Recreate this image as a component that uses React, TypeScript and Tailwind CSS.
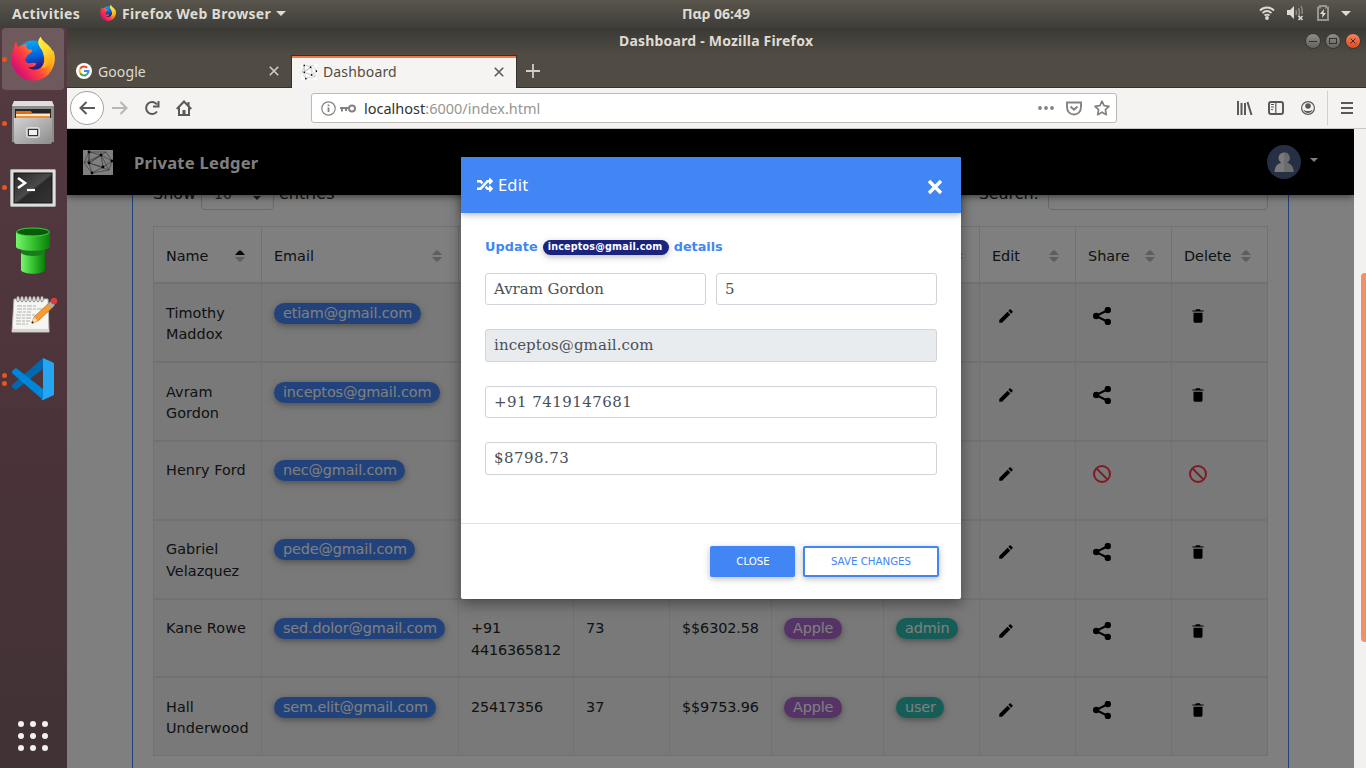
import React from "react";
import { IoMdCreate, IoMdTrash } from "react-icons/io";
import { FaRandom } from "react-icons/fa";

const widths = "grid-cols-[108px_197px_115px_96px_102px_112px_96px_96px_96px_97px]";

function Firefox({ size }: { size: number }) {
  return (
    <svg width={size} height={size} viewBox="0 0 44 44">
      <defs>
        <linearGradient id="fxo" x1="0.85" y1="0.1" x2="0.1" y2="0.7">
          <stop offset="0" stopColor="#ffe22b" />
          <stop offset="0.3" stopColor="#ffa318" />
          <stop offset="0.65" stopColor="#ff4040" />
          <stop offset="1" stopColor="#dc1170" />
        </linearGradient>
        <linearGradient id="fxb" x1="0.4" y1="0" x2="0.6" y2="1">
          <stop offset="0" stopColor="#00aef5" />
          <stop offset="0.45" stopColor="#0068e2" />
          <stop offset="0.8" stopColor="#2b1b83" />
        </linearGradient>
        <linearGradient id="fxy" x1="0" y1="0" x2="0.4" y2="1">
          <stop offset="0" stopColor="#fff44f" />
          <stop offset="0.6" stopColor="#ffd52e" />
          <stop offset="1" stopColor="#ffa818" />
        </linearGradient>
      </defs>
      <circle cx="22" cy="20" r="16.500" fill="url(#fxb)" />
      <path
        d="M5.500 4.500C5 7 6 9 7.500 10 10 8 13 7.500 16 7.500 15 9 15 11 17 12l4.500 1c0 2-2.500 3-5 5l-1 2.500C13.500 22 14 25 17 26c3 1 5-1.500 8.500.5-.5 2-3.500 4.500-8.500 3.500 3 3.500 9 3.500 13 .5C35 26 33 18 31 13c-4-5-5-9-1.300-13.300C31 5 40 8 41.500 15l.5-2c4 9 1 19-5 25-10 9-25 7-32-3-6-7-6-17-2-24 0-3 1-5 2.500-6.500Z"
        fill="url(#fxo)"
      />
      <path d="M29.700 0C26 4 27 8 31 13c3 7 4 13-1 18 7 0 12.500-6 12.500-15C40 8 31 6 29.700 0Z" fill="url(#fxy)" />
    </svg>
  );
}

function Files() {
  return (
    <svg width="42" height="44" viewBox="0 0 42 44">
      <defs>
        <linearGradient id="cab" x1="0" y1="0" x2="1" y2="1">
          <stop offset="0" stopColor="#d2d2d2" />
          <stop offset="1" stopColor="#8c8c8c" />
        </linearGradient>
      </defs>
      <path d="M2 0h38l2 5v36H0V5Z" fill="#8d8d8d" />
      <path d="M2 0h38l2 5H0Z" fill="#dedede" />
      <rect x="3" y="8" width="36" height="10" fill="#252525" />
      <path d="M4 10h15l1 2h18v5H4Z" fill="#e06b18" />
      <rect x="4" y="13" width="34" height="2" fill="#ffe8c4" />
      <rect x="4" y="15" width="34" height="3" fill="#f08d38" />
      <path d="M2 17h38v24c0 1-1 2-2 2H4c-1 0-2-1-2-2Z" fill="url(#cab)" />
      <rect x="14.500" y="26.500" width="13" height="10" rx="2" fill="#b9b9b9" stroke="#dedede" />
      <rect x="16.500" y="28.500" width="9" height="6" fill="#efefef" stroke="#333" />
    </svg>
  );
}

function Terminal() {
  return (
    <svg width="46" height="38" viewBox="0 0 46 38" className="mt-0.5">
      <defs>
        <linearGradient id="tm" x1="0" y1="0" x2="1" y2="1">
          <stop offset="0" stopColor="#262626" />
          <stop offset="0.5" stopColor="#4b4b4b" />
          <stop offset="0.55" stopColor="#292929" />
          <stop offset="1" stopColor="#353535" />
        </linearGradient>
      </defs>
      <rect x="0.500" y="0.500" width="45" height="37" rx="1" fill="#dedede" stroke="#aaa" />
      <rect x="4" y="4" width="38" height="30" fill="url(#tm)" stroke="#151515" />
      <path d="m8 9 7 5-7 5" fill="none" stroke="#fff" strokeWidth="2.600" />
      <path d="M17 21h8" stroke="#fff" strokeWidth="2.200" />
    </svg>
  );
}

function Pipe() {
  return (
    <svg width="36" height="48" viewBox="0 0 36 48">
      <defs>
        <linearGradient id="pp">
          <stop offset="0" stopColor="#78f56d" />
          <stop offset="0.5" stopColor="#35c130" />
          <stop offset="1" stopColor="#087d08" />
        </linearGradient>
      </defs>
      <path d="M6 18v25c2 5 22 5 24 0V18Z" fill="url(#pp)" />
      <path d="M6 22v4c4 4 20 4 24 0v-4Z" fill="#197c19" />
      <path d="M1 5v15c3 5 31 5 34 0V5Z" fill="url(#pp)" />
      <ellipse cx="18" cy="5" rx="16.500" ry="4" fill="#085c08" stroke="#3fd13a" />
    </svg>
  );
}

function Notes() {
  return (
    <svg width="48" height="38" viewBox="0 0 48 38" className="ml-0.5">
      <path d="M4 3h34l1 33H2Z" fill="#f5f5f2" stroke="#b7b7b2" />
      <path d="M2 33h37v3H2Z" fill="#d5d5ce" />
      {[8, 12, 16, 20, 24, 28, 32].map((x) => (
        <ellipse key={x} cx={x} cy="3" rx="1.300" ry="3" fill="#eee" stroke="#777" strokeWidth="0.800" />
      ))}
      <path d="M7 10h19M7 13h25M7 16h14M6 19h20M6 22h15M6 25h14M6 28h12" stroke="#aaa" strokeWidth="0.900" strokeDasharray="5 1 3 1" />
      <path d="m22 27 2-6L39 7l4 4-15 14Z" fill="#f59b31" stroke="#b96a1a" strokeWidth="0.700" />
      <path d="m22 27 2-6 4 4Z" fill="#f6d8ab" />
      <circle cx="22.500" cy="26.500" r="1" fill="#222" />
      <path d="m38 8 3-3 4 4-3 3Z" fill="#aaa" />
      <circle cx="44" cy="5" r="3.200" fill="#dd3940" />
    </svg>
  );
}

function Code() {
  return (
    <svg width="42" height="42" viewBox="0 0 42 42">
      <path d="M31 0 0 27c-.5 1 .2 2 1 3l3 2L31 11Z" fill="#0068ae" />
      <path d="M31 42 0 15c-.5-1 .2-2 1-3l3-2 27 21Z" fill="#0086d8" />
      <path d="m31 0 10 4.500c1 .5 1 1 1 2v29c0 1 0 1.500-1 2L31 42c-2 0-1-1 0-2Z" fill="#25a5f2" />
    </svg>
  );
}

function Net({ size, h, bg, line }: { size: number; h: number; bg: string; line: string }) {
  return (
    <svg width={size} height={h} viewBox="0 0 30 25" preserveAspectRatio="none">
      <rect width="30" height="25" fill={bg} />
      <path
        d="M6 2 23 2 29 11 26 20 9 23 1 13ZM6 2 18 5 29 11 20 17 9 23 6 13ZM6 13 18 5 20 17ZM6 2 6 13 26 20M1 13 18 5 26 20M23 2 6 13"
        fill="none"
        stroke={line}
        strokeWidth="0.500"
      />
      {[[6, 2], [18, 5], [29, 11], [20, 17], [9, 23], [6, 13]].map(([x, y]) => (
        <circle key={`${x}-${y}`} cx={x} cy={y} r="1.400" fill="#000" />
      ))}
    </svg>
  );
}

function DockItem({ dots = 0, active = false, children }: { dots?: number; active?: boolean; children: React.ReactNode }) {
  return (
    <div className="flex h-16 w-[67px] items-center">
      <div className="flex w-0.5 flex-none" />
      <div className={`flex h-[62px] w-[62px] items-center rounded ${active ? "bg-[#6e595d]" : ""}`}>
        <div className="flex w-[5px] flex-none flex-col gap-[3px]">
          {Array.from({ length: dots }, (_, i) => (
            <div key={i} className="h-[5px] w-[5px] rounded-full bg-[#e95420]" />
          ))}
        </div>
        <div className="flex w-[52px] flex-none justify-center">{children}</div>
      </div>
    </div>
  );
}

function Sort({ asc = false }: { asc?: boolean }) {
  return (
    <svg width="10" height="12" viewBox="0 0 10 12" className="-mt-0.5">
      <path d="M0 5 4 .5h2L10 5Z" fill={asc ? "#111" : "#bcbcbc"} />
      <path d="M0 7h10L6 11.500H4Z" fill="#bcbcbc" />
    </svg>
  );
}

function Share() {
  return (
    <svg width="18" height="18" viewBox="0 0 18 18">
      <path d="M15 3 3 9l12 6" fill="none" stroke="#000" strokeWidth="2" />
      <circle cx="14.800" cy="3" r="3.200" />
      <circle cx="3.200" cy="9" r="3.200" />
      <circle cx="14.800" cy="15" r="3.200" />
    </svg>
  );
}

function Blocked() {
  return (
    <svg width="18" height="18" viewBox="0 0 18 18" fill="none" stroke="#ff3547" strokeWidth="2">
      <circle cx="9" cy="9" r="8" />
      <path d="m3.400 3.400 11.200 11.200" />
    </svg>
  );
}

function Pill({ color, children }: { color: string; children: React.ReactNode }) {
  return (
    <span className={`inline-flex h-[21px] items-center rounded-full pl-[9px] pr-[8.5px] leading-none tracking-[-0.13px] text-white shadow-[0_2px_5px_0_rgba(0,0,0,0.2),0_2px_10px_0_rgba(0,0,0,0.16)] ${color}`}>
      {children}
    </span>
  );
}

type Row = { name: string; email: string; h: string; pad: string; lift?: boolean; phone?: string; age?: string; amount?: string; role?: string; locked?: boolean };
const rows: Row[] = [
  { name: "Timothy Maddox", email: "etiam@gmail.com", h: "h-[79px]", pad: "pt-[19px] leading-[21px]" },
  { name: "Avram Gordon", email: "inceptos@gmail.com", h: "h-[79px]", pad: "pt-[19px] leading-[21px]" },
  { name: "Henry Ford", email: "nec@gmail.com", h: "h-[79px]", pad: "pt-[18px] leading-[21.6px]", locked: true },
  { name: "Gabriel Velazquez", email: "pede@gmail.com", h: "h-[79px]", pad: "pt-[18px] leading-[21.6px]", lift: true },
  { name: "Kane Rowe", email: "sed.dolor@gmail.com", h: "h-[78px]", pad: "pt-[18px] leading-[21.6px]", lift: true, phone: "+91 4416365812", age: "73", amount: "$$6302.58", role: "admin" },
  { name: "Hall Underwood", email: "sem.elit@gmail.com", h: "h-[79px]", pad: "pt-[19px] leading-[21px]", phone: "25417356", age: "37", amount: "$$9753.96", role: "user" },
];
const heads = ["Name", "Email", "", "", "", "", "", "Edit", "Share", "Delete"];

function Ledger() {
  const cell = "border-l border-[#dee2e6] pl-3";
  return (
    <div className="h-full overflow-hidden bg-white pl-[65px] pt-[50px] font-['DejaVu_Sans',sans-serif] text-[14.4px] text-[#212529]">
      <div className="h-[720px] w-[1157px] border-x border-[#4285f4] px-5">
        <div className="flex h-[31px] items-center justify-between text-[16px]">
          <div className="flex h-[31px] items-center">
            <span className="-mt-0.5 w-12">Show</span>
            <div className="flex h-[31px] w-[73px] items-center justify-between rounded border border-[#ced4da] pl-3 pr-3 text-[#495057]">
              <span className="text-[14px]">10</span>
              <svg width="8" height="10" viewBox="0 0 8 10" className="fill-[#343a40]">
                <path d="m4 0 4 4H0ZM0 6h8l-4 4Z" />
              </svg>
            </div>
            <span className="-mt-0.5 ml-[5px]">entries</span>
          </div>
          <div className="flex items-center">
            <span className="-mt-0.5 mr-[9px]">Search:</span>
            <div className="h-[31px] w-[220px] rounded border border-[#ced4da]" />
          </div>
        </div>
        <div className="mt-4 w-[1115px] border-b border-r border-[#dee2e6]">
          <div className={`grid h-14 border-t border-[#dee2e6] ${widths}`}>
            {heads.map((h, i) => (
              <div key={i} className={`flex items-center justify-between border-l border-[#dee2e6] pl-3 pt-[5px] ${i === 9 ? "pr-[17px]" : "pr-4"}`}>
                <span>{h}</span>
                <Sort asc={i === 0} />
              </div>
            ))}
          </div>
          {rows.map((r) => (
            <div key={r.name} className={`grid border-t-2 border-[#dee2e6] bg-[#f2f2f2] ${widths} ${r.h}`}>
              <div className={`${cell} ${r.pad}`}><div className="w-[84px] tracking-[0.06px]">{r.name}</div></div>
              <div className={`${cell} ${r.pad}`}><Pill color="bg-[#4285f4]">{r.email}</Pill></div>
              <div className={`${cell} ${r.pad}`}>{r.phone && <div className="w-[92px] tracking-[-0.15px]">{r.phone}</div>}</div>
              <div className={`${cell} ${r.pad}`}>{r.age}</div>
              <div className={`${cell} tracking-[-0.1px] ${r.pad}`}>{r.amount}</div>
              <div className={`${cell} ${r.pad}`}>{r.role && <Pill color="bg-[#aa66cc]">Apple</Pill>}</div>
              <div className={`${cell} ${r.pad}`}>{r.role && <Pill color="bg-[#2bbbad]">{r.role}</Pill>}</div>
              {["edit", "share", "delete"].map((kind) => (
                <div key={kind} className={`border-l border-[#dee2e6] pl-3.5 text-black ${r.lift ? "pt-[19px]" : "pt-5"}`}>
                  <div className="flex h-6 w-6 items-center justify-center">
                    {kind === "edit" && <IoMdCreate size={18} />}
                    {kind !== "edit" && r.locked && <Blocked />}
                    {kind === "share" && !r.locked && <Share />}
                    {kind === "delete" && !r.locked && <IoMdTrash size={18} />}
                  </div>
                </div>
              ))}
            </div>
          ))}
        </div>
      </div>
    </div>
  );
}

function Field({ value, cls }: { value: string; cls: string }) {
  return (
    <div className={`flex items-center rounded-[3px] border border-[#ced4da] px-2 font-['DejaVu_Serif',serif] text-[15px] text-[#495057] ${cls}`}>
      {value}
    </div>
  );
}

function EditModal() {
  return (
    <div className="absolute left-[394px] top-7 flex h-[442px] w-[500px] flex-col rounded-[2px] bg-white font-['DejaVu_Sans',sans-serif] shadow-[0_5px_11px_0_rgba(0,0,0,0.18),0_4px_15px_0_rgba(0,0,0,0.25)]">
      <div className="flex h-14 flex-none items-center rounded-t-[2px] bg-[#4285f4] pl-4 pr-[18px] text-white shadow-[0_2px_5px_0_rgba(0,0,0,0.16),0_2px_10px_0_rgba(0,0,0,0.12)]">
        <FaRandom size={16} />
        <span className="ml-[5px] flex-1 font-['Noto_Sans',sans-serif] text-[16.5px] tracking-[0.2px]">Edit</span>
        <svg width="16" height="16" viewBox="0 0 16 16" className="mt-1">
          <path d="m2 2 12 12M14 2 2 14" stroke="#fff" strokeWidth="3.400" />
        </svg>
      </div>
      <div className="h-[310px] flex-none px-6 pt-[25px]">
        <div className="flex h-[18px] items-center text-[12.8px] font-bold text-[#4285f4]">
          <span className="tracking-[0.1px]">Update</span>
          <span className="ml-[5px] mr-[5px] mt-px flex h-[15px] w-[126px] items-center whitespace-nowrap rounded-full bg-[#1a237e] pb-px pl-[5px] text-[9.6px] tracking-[0.18px] text-white shadow-[0_2px_5px_0_rgba(0,0,0,0.16),0_2px_10px_0_rgba(0,0,0,0.12)]">inceptos@gmail.com</span>
          <span>details</span>
        </div>
        <div className="mt-[17px] flex gap-2.5">
          <Field value="Avram Gordon" cls="h-8 w-[221px] tracking-[-0.04px]" />
          <Field value="5" cls="h-8 w-[221px]" />
        </div>
        <Field value="inceptos@gmail.com" cls="mt-6 h-[33px] w-[452px] bg-[#e9ecef] tracking-[0.09px]" />
        <Field value="+91 7419147681" cls="mt-6 h-8 w-[452px] tracking-[0.45px]" />
        <Field value="$8798.73" cls="mt-6 h-[33px] w-[452px] tracking-[0.46px]" />
      </div>
      <div className="flex flex-1 justify-end gap-2 border-t border-[#dee2e6] pr-[22px] pt-[22px] text-[10.24px]">
        <div className="flex h-[31px] w-[85px] items-center justify-center rounded-[2px] bg-[#4285f4] pl-px text-white shadow-[0_2px_5px_0_rgba(0,0,0,0.16),0_2px_10px_0_rgba(0,0,0,0.12)]">CLOSE</div>
        <div className="flex h-[31px] w-[136px] items-center justify-center rounded-[2px] border-2 border-[#4285f4] text-[#4285f4] shadow-[0_2px_5px_0_rgba(0,0,0,0.16),0_2px_10px_0_rgba(0,0,0,0.12)]">SAVE CHANGES</div>
      </div>
    </div>
  );
}

function SystemBar() {
  return (
    <div className="flex h-7 flex-none items-center bg-linear-to-b from-[#5a564d] to-[#3e3d39] pb-0.5 pl-3 text-[14px] font-bold text-[#dfdbd2]">
      <span className="w-[88px] tracking-[0.3px]">Activities</span>
      <Firefox size={16} />
      <span className="ml-[6px] w-[149px] whitespace-nowrap tracking-[0.3px]">Firefox Web Browser</span>
      <svg width="10" height="5" viewBox="0 0 10 5" className="ml-[5px] fill-[#dfdbd2]"><path d="M0 0h10L5 5Z" /></svg>
      <span className="ml-[396px] w-[70px] whitespace-nowrap">Παρ 06:49</span>
      <div className="ml-auto flex items-center pr-[15px]">
        <svg width="16" height="14" viewBox="0 0 16 14" fill="none" stroke="#dfdbd2" strokeWidth="1.800">
          <path d="M1 4.500c4-4 10-4 14 0M3.500 7c3-2.600 6-2.600 9 0M5.500 9.500c2-1.500 3-1.500 5 0" />
          <circle cx="8" cy="12" r="1" fill="#dfdbd2" />
        </svg>
        <svg width="18" height="16" viewBox="0 0 18 16" className="ml-3">
          <path d="M0 5h3l4-4v13l-4-4H0Z" fill="#dfdbd2" />
          <path d="M9 5q1 2.500 0 5M11.500 3q2 4.500 0 9M14 1q2 4 1 8" fill="none" stroke="#8f8b84" strokeWidth="1.400" />
          <path d="m11.500 11 4 4m0-4-4 4" stroke="#dfdbd2" strokeWidth="1.600" />
        </svg>
        <svg width="12" height="16" viewBox="0 0 12 16" className="ml-3">
          <path d="M1 2.500h2V1h6v1.500h2V15H1Z" fill="none" stroke="#98948c" strokeWidth="2" />
          <path d="M7 4 3 9h2.500L5 13l4-5H6.500Z" fill="#dfdbd2" />
        </svg>
        <svg width="10" height="5" viewBox="0 0 10 5" className="ml-3 fill-[#dfdbd2]"><path d="M0 0h10L5 5Z" /></svg>
      </div>
    </div>
  );
}

function Cross({ color }: { color: string }) {
  return <svg width="10" height="10" viewBox="0 0 10 10"><path d="m.8.8 8.400 8.400m0-8.400L.8 9.200" stroke={color} strokeWidth="1.600" /></svg>;
}

function WindowTop() {
  const round = "flex h-4 w-4 items-center justify-center rounded-full border border-[#383733]";
  return (
    <>
      <div className="flex h-[27px] flex-none items-center bg-linear-to-b from-[#3a3934] to-[#504c44] pb-px pr-[5px]">
        <span className="-mt-px ml-[552px] whitespace-nowrap text-[14px] font-bold tracking-[0.2px] text-[#dfdbd2]">Dashboard - Mozilla Firefox</span>
        <div className="ml-auto flex gap-1">
          <div className={`${round} bg-linear-to-b from-[#8f8d87] to-[#65635d]`}><div className="h-px w-2 bg-[#33322e]" /></div>
          <div className={`${round} bg-linear-to-b from-[#8f8d87] to-[#65635d]`}><div className="h-1.5 w-2 border border-[#33322e]" /></div>
          <div className={`${round} bg-linear-to-b from-[#f3825c] to-[#dc4c1c]`}>
            <svg width="6" height="6" viewBox="0 0 6 6"><path d="m.5.5 5 5m0-5-5 5" stroke="#44281e" /></svg>
          </div>
        </div>
      </div>
      <div className="flex h-[33px] flex-none bg-[#504c44] text-[14px] text-[#dfdbd2]">
        <div className="flex w-[224px] items-center border-b border-[#34322e] pl-[9px] pr-3">
          <svg width="16" height="16" viewBox="0 0 16 16" fill="none" strokeWidth="2">
            <circle cx="8" cy="8" r="8" fill="#fff" />
            <path d="M11.200 4.800A4.500 4.500 0 0 0 4.200 5.700" stroke="#ea4335" />
            <path d="M4.200 5.700a4.500 4.500 0 0 0 0 4.600" stroke="#fbbc05" />
            <path d="M4.200 10.300a4.500 4.500 0 0 0 6.600 1.200" stroke="#34a853" />
            <path d="M10.800 11.500A4.500 4.500 0 0 0 12.500 8H8" stroke="#4285f4" />
          </svg>
          <span className="ml-1.5 flex-1 tracking-[0.1px]">Google</span>
          <Cross color="#d2cec5" />
        </div>
        <div className="flex w-[226px] items-center border-x border-t border-[#34322e] bg-[#f5f4f2] pl-[9px] pr-3 text-[#504c44] shadow-[inset_0_2px_0_#f07746]">
          <Net size={16} h={16} bg="#fff" line="#888" />
          <span className="-mt-px ml-1.5 flex-1 tracking-[0.15px]">Dashboard</span>
          <Cross color="#5d5a53" />
        </div>
        <div className="flex flex-1 items-center border-b border-[#34322e] pl-[9px]">
          <svg width="14" height="14" viewBox="0 0 14 14"><path d="M7 0v14M0 7h14" stroke="#d2cec5" strokeWidth="1.800" /></svg>
        </div>
      </div>
      <div className="flex h-[41px] flex-none items-center border-b border-[#c9c6c1] bg-[#f4f3f1] text-[#5b5955]">
        <div className="ml-[3px] flex h-[34px] w-[34px] items-center justify-center rounded-full border border-[#a5a39f] bg-white">
          <svg width="16" height="14" viewBox="0 0 16 14" fill="none" stroke="currentColor" strokeWidth="2"><path d="M7.500 1 1.500 7l6 6M1.500 7H16" /></svg>
        </div>
        <svg width="16" height="14" viewBox="0 0 16 14" fill="none" stroke="#b8b6b2" strokeWidth="2" className="ml-2"><path d="m8.500 1 6 6-6 6M14.500 7H0" /></svg>
        <svg width="16" height="16" viewBox="0 0 16 16" fill="none" stroke="currentColor" strokeWidth="2" className="ml-4">
          <path d="M13 4.500A6 6 0 1 0 13 11.500M14.500 1v5.500H9" />
        </svg>
        <svg width="16" height="16" viewBox="0 0 16 16" fill="none" stroke="currentColor" strokeWidth="2" className="ml-4">
          <path d="M.8 9 8 1.500 15.200 9M3 7.500V15h10V7.500M12.500 2v4" /><path d="M8 15v-5" strokeWidth="3" />
        </svg>
        <div className="ml-[119px] flex h-[30px] w-[806px] items-center rounded-[3px] border border-[#bdbab5] bg-white pl-[9px] pr-1.5 text-[#85837f]">
          <svg width="15" height="15" viewBox="0 0 15 15" fill="none" stroke="currentColor"><circle cx="7.500" cy="7.500" r="6.700" strokeWidth="1.200" /><path d="M7.500 6.500V11M7.500 3.500v1.800" strokeWidth="1.800" /></svg>
          <svg width="16" height="9" viewBox="0 0 16 9" fill="none" stroke="currentColor" strokeWidth="2" className="ml-1"><circle cx="12" cy="4.500" r="3" /><path d="M9 4H0M2 4v3.500M6 4v3" /></svg>
          <span className="ml-2 flex-1 whitespace-nowrap pt-0.5 text-[14.5px] text-[#989590]"><span className="text-[#33322e]">localhost</span>:6000/index.html</span>
          <svg width="16" height="4" viewBox="0 0 16 4" fill="currentColor"><circle cx="2" cy="2" r="1.900" /><circle cx="8" cy="2" r="1.900" /><circle cx="14" cy="2" r="1.900" /></svg>
          <svg width="16" height="15" viewBox="0 0 16 15" fill="none" stroke="currentColor" strokeWidth="1.900" className="ml-3"><path d="M1 1.500h14V6c0 10-14 10-14 0ZM4.500 5.500 8 8.800l3.500-3.300" /></svg>
          <svg width="16" height="16" viewBox="0 0 16 16" fill="none" stroke="currentColor" strokeWidth="1.700" strokeLinejoin="round" className="ml-3"><path d="m8 1.200 2.100 4.500 4.900.6-3.600 3.400.9 5L8 12.200l-4.300 2.500.9-5L1 6.300l4.900-.6Z" /></svg>
        </div>
        <svg width="16" height="14" viewBox="0 0 16 14" stroke="currentColor" strokeWidth="2" className="ml-[120px]"><path d="M1 0v14M4.500 2v12M8 2v12M10.500 1l4 13" /></svg>
        <svg width="16" height="14" viewBox="0 0 16 14" fill="none" stroke="currentColor" className="ml-[15px]"><rect x="1" y="1" width="14" height="12" rx="2" strokeWidth="2" /><path d="M7.800 1v12M3 3.500h3M3 6h3M3 8.500h2" strokeWidth="1.200" /></svg>
        <svg width="14" height="14" viewBox="0 0 14 14" className="ml-[17px]"><circle cx="7" cy="7" r="6.400" fill="none" stroke="currentColor" strokeWidth="1.200" /><circle cx="7" cy="5" r="2.800" fill="currentColor" /><path d="M2.500 8.500c2 2 7 2 9 0-.5 4.500-8.500 4.500-9 0" fill="currentColor" /></svg>
        <div className="ml-3 h-[34px] w-px bg-[#d2d0cc]" />
        <svg width="12" height="12" viewBox="0 0 12 12" stroke="currentColor" strokeWidth="2" className="ml-[13px]"><path d="M0 1h12M0 6h12M0 11h12" /></svg>
      </div>
    </>
  );
}

export default function App() {
  return (
    <div className="flex h-[768px] w-[1366px] flex-col overflow-hidden font-['Noto_Sans',sans-serif]">
      <SystemBar />
      <div className="flex min-h-0 flex-1">
        <div className="flex w-[67px] flex-none flex-col justify-between bg-linear-to-b from-[#543b41] via-[#4c343a] to-[#403235] pb-[17px]">
          <div className="-mt-px flex flex-col">
            <DockItem dots={1} active><Firefox size={44} /></DockItem>
            <DockItem dots={1}><Files /></DockItem>
            <DockItem dots={1}><Terminal /></DockItem>
            <DockItem><Pipe /></DockItem>
            <DockItem><Notes /></DockItem>
            <DockItem dots={2}><Code /></DockItem>
          </div>
          <div className="ml-[18px] grid w-[30px] grid-cols-3 gap-1.5">
            {Array.from({ length: 9 }, (_, i) => <div key={i} className="h-1.5 w-1.5 rounded-full bg-[#f2f0f0]" />)}
          </div>
        </div>
        <div className="flex min-w-0 flex-1 flex-col">
          <WindowTop />
          <div className="flex min-h-0 flex-1 bg-[#f2f1ef]">
            <div className="relative h-full w-[1287px] overflow-hidden">
              <Ledger />
              <div className="absolute inset-x-0 top-0 flex h-[66px] items-center bg-black pl-4 pr-9 pt-px shadow-[0_2px_5px_0_rgba(0,0,0,0.3),0_2px_10px_0_rgba(0,0,0,0.25)]">
                <Net size={30} h={25} bg="#fff" line="#444" />
                <span className="ml-[21px] flex-1 pt-px text-[16.5px] font-bold tracking-[0.3px] text-white">Private Ledger</span>
                <svg width="34" height="34" viewBox="0 0 34 34" className="-mt-0.5">
                  <circle cx="17" cy="17" r="17" fill="#4c5f86" />
                  <circle cx="17" cy="13" r="5.500" fill="#f5f5f5" />
                  <path d="M7.500 27c0-6 4-9 7-9h5c3 0 7 3 7 9Z" fill="#f5f5f5" />
                  <path d="M17 7.500a5.500 5.500 0 0 1 2.500 10.500c3 0 7 3 7 9H17Z" fill="#d8d8d8" />
                </svg>
                <svg width="8" height="4" viewBox="0 0 8 4" className="-mt-1.5 ml-[9px] fill-white"><path d="M0 0h8L4 4Z" /></svg>
              </div>
              <div className="absolute inset-0 bg-black/50" />
              <EditModal />
            </div>
            <div className="flex flex-1 justify-end pt-36">
              <div className="h-[369px] w-[5px] rounded-l-sm bg-[#f09068]" />
            </div>
          </div>
        </div>
      </div>
    </div>
  );
}
